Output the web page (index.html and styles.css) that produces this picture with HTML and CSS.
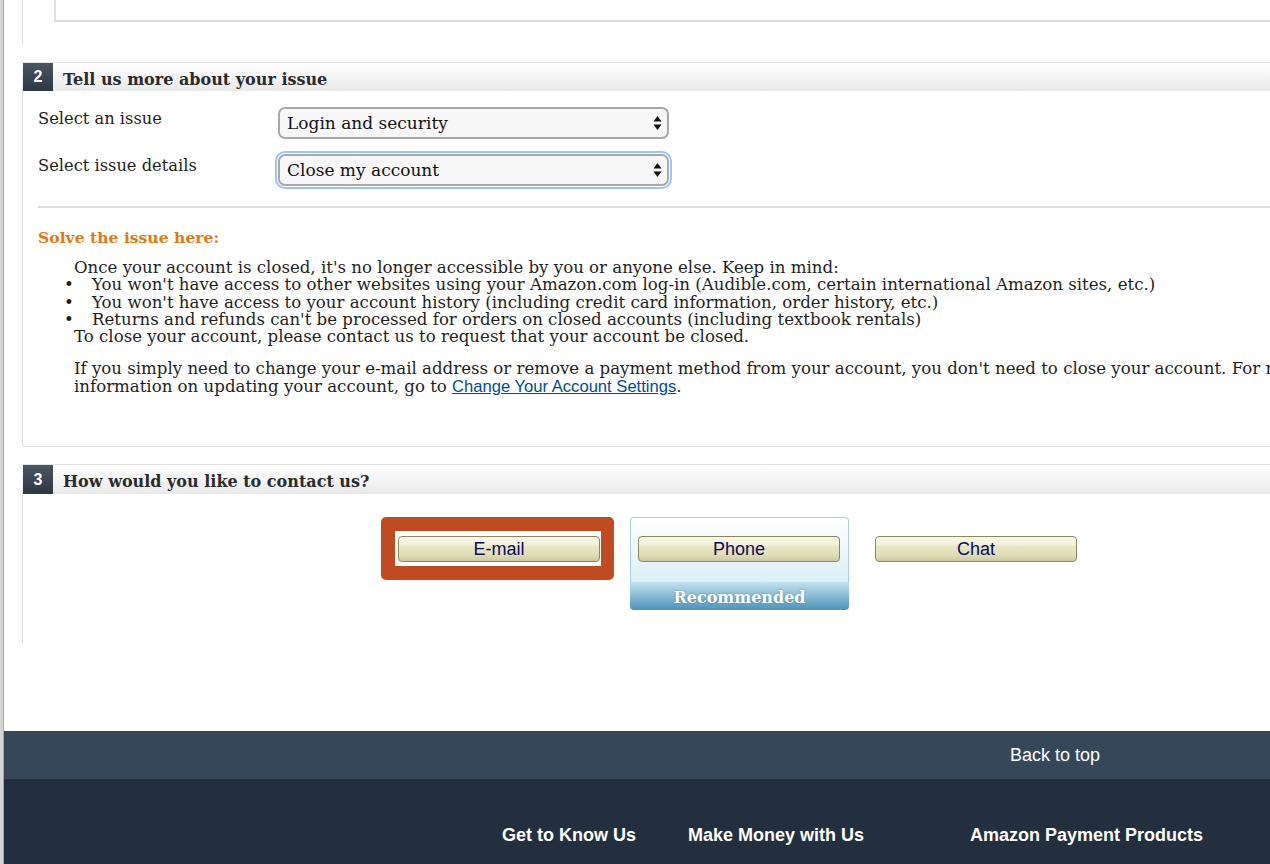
FILE: index.html
```html
<!DOCTYPE html>
<html>
<head>
<meta charset="utf-8">
<link rel="stylesheet" href="styles.css">
</head>
<body>
<div class="wrap">
  <div class="edge"></div>
  <div class="main">
    <div class="prev">
      <div class="prev-inner"></div>
    </div>

    <div class="section s2">
      <div class="sec-head">
        <span class="badge">2</span>
        <span class="sec-title">Tell us more about your issue</span>
      </div>
      <div class="sec-body">
        <div class="row">
          <span class="label">Select an issue</span>
          <div class="select">
            <span>Login and security</span>
            <svg width="9" height="16" viewBox="0 0 9 16"><path d="M4.5 1 L8.5 6.5 L0.5 6.5 Z M4.5 15 L8.5 9.5 L0.5 9.5 Z" fill="#111"/></svg>
          </div>
        </div>
        <div class="row">
          <span class="label">Select issue details</span>
          <div class="select focus">
            <span>Close my account</span>
            <svg width="9" height="16" viewBox="0 0 9 16"><path d="M4.5 1 L8.5 6.5 L0.5 6.5 Z M4.5 15 L8.5 9.5 L0.5 9.5 Z" fill="#111"/></svg>
          </div>
        </div>
        <div class="rule"></div>
        <h3 class="solve">Solve the issue here:</h3>
        <div class="answer">
          <div>Once your account is closed, it's no longer accessible by you or anyone else. Keep in mind:</div>
          <ul>
            <li>You won't have access to other websites using your Amazon.com log-in (Audible.com, certain international Amazon sites, etc.)</li>
            <li>You won't have access to your account history (including credit card information, order history, etc.)</li>
            <li>Returns and refunds can't be processed for orders on closed accounts (including textbook rentals)</li>
          </ul>
          <div>To close your account, please contact us to request that your account be closed.</div>
          <div class="gap"></div>
          <div>If you simply need to change your e-mail address or remove a payment method from your account, you don't need to close your account. For more</div>
          <div>information on updating your account, go to <a href="#">Change Your Account Settings</a>.</div>
        </div>
      </div>
    </div>

    <div class="section s3">
      <div class="sec-head">
        <span class="badge">3</span>
        <span class="sec-title">How would you like to contact us?</span>
      </div>
      <div class="sec-body contact">
        <div class="hl">
          <div class="hl-inner"><button class="btn">E-mail</button></div>
        </div>
        <div class="card">
          <div class="card-top"><button class="btn">Phone</button></div>
          <div class="card-band">Recommended</div>
        </div>
        <div class="plain"><button class="btn">Chat</button></div>
      </div>
    </div>

    <div class="footer">
      <div class="back">Back to top</div>
      <div class="foot-main">
        <div class="col c1">Get to Know Us</div>
        <div class="col c2">Make Money with Us</div>
        <div class="col c3">Amazon Payment Products</div>
      </div>
    </div>
  </div>
</div>
</body>
</html>
```

FILE: styles.css
```css
html, body {
  margin: 0;
  padding: 0;
  background: #fff;
  overflow: hidden;
}
.wrap {
  display: flex;
  width: 1270px;
  min-height: 864px;
}
.edge {
  width: 3px;
  flex: none;
  background: #d4d4d4;
  border-right: 1px solid #a8a8a8;
}
.main {
  flex: 1;
  min-width: 0;
  font-family: "DejaVu Serif", serif;
  color: #1e1e1e;
}
.prev {
  margin-left: 18px;
  height: 44px;
  border-left: 1px solid #e0e0e0;
}
.prev-inner {
  margin-left: 31px;
  height: 20px;
  border-left: 2px solid #e0e0e0;
  border-bottom: 2px solid #dcdcdc;
}
.section {
  margin-left: 18px;
}
.s2 {
  margin-top: 18px;
}
.s3 {
  margin-top: 17px;
}
.sec-head {
  display: flex;
  align-items: center;
  height: 28px;
  border-top: 1px solid #e2e2e2;
  background: linear-gradient(#ffffff, #e9e9e9);
}
.s3 .sec-head {
  height: 29px;
}
.badge {
  width: 30px;
  height: 100%;
  margin-left: 1px;
  background: linear-gradient(#4a5562, #2e3843);
  color: #fff;
  font-family: "Liberation Sans", Arial, sans-serif;
  font-weight: bold;
  font-size: 16px;
  display: flex;
  align-items: center;
  justify-content: center;
}
.sec-title {
  margin-left: 10px;
  font-weight: bold;
  font-size: 16px;
  color: #2b2b2b;
  padding-top: 4px;
}
.sec-body {
  border-left: 1px solid #dcdcdc;
}
.s2 .sec-body {
  height: 356px;
  border-bottom: 1px solid #e0e0e0;
  border-bottom-left-radius: 4px;
  padding-top: 16px;
  box-sizing: border-box;
}
.row {
  display: flex;
  align-items: flex-start;
  padding-left: 15px;
  margin-bottom: 15px;
}
.label {
  width: 240px;
  font-size: 16.3px;
  padding-top: 2px;
}
.select {
  width: 375px;
  height: 28px;
  border: 2px solid #a8a8a8;
  border-radius: 7px;
  background: #f7f7f7;
  display: flex;
  align-items: center;
  justify-content: space-between;
  padding: 0 5px 0 7px;
  font-size: 17px;
  color: #111;
}
.select.focus {
  outline: 2px solid #9bc3f6;
  outline-offset: 1px;
}
.rule {
  margin: 20px 0 0 15px;
  height: 2px;
  background: #dedede;
}
.solve {
  margin: 20px 0 0 15px;
  font-size: 15.6px;
  font-weight: bold;
  color: #e47911;
}
.answer {
  margin: 12px 0 0 51px;
  font-size: 16.6px;
  line-height: 17.3px;
  white-space: nowrap;
}
.answer ul {
  margin: 0;
  padding: 0;
  list-style: none;
}
.answer li {
  display: flex;
  margin-left: -10px;
}
.answer li::before {
  content: "\2022";
  width: 28px;
  flex: none;
}
.gap {
  height: 15px;
}
.answer a {
  font-family: "Liberation Sans", Arial, sans-serif;
  color: #004b91;
  text-decoration: underline;
}
.contact {
  height: 149px;
  display: flex;
  align-items: flex-start;
  padding: 23px 0 0 358px;
  box-sizing: border-box;
}
.btn {
  width: 202px;
  height: 26px;
  border: 1px solid #8c885d;
  border-radius: 4px;
  background: linear-gradient(#f7f6e8 0%, #f3f2df 30%, #e8e6c2 40%, #e3e1bb 70%, #cbc8a2 100%);
  font-family: "Liberation Sans", Arial, sans-serif;
  font-size: 18px;
  color: #0b0b5c;
  padding: 0;
  display: block;
}
.hl {
  background: #c04b20;
  border-radius: 5px;
  padding: 14px 13px 14px 14px;
}
.hl-inner {
  background: #fff;
  padding: 5px 1px 4px 3px;
}
.card {
  margin-left: 16px;
  width: 219px;
}
.card-top {
  height: 65px;
  border: 1px solid #a9cfe2;
  border-bottom: none;
  border-radius: 4px 4px 0 0;
  background: linear-gradient(#ffffff, #dbeef7);
  padding: 18px 0 0 7px;
  box-sizing: border-box;
}
.card-band {
  height: 28px;
  background: linear-gradient(#c3e2ef, #4b94ba);
  border-radius: 0 0 4px 4px;
  color: #fff;
  font-weight: bold;
  font-size: 16px;
  text-align: center;
  line-height: 32px;
  text-shadow: 0 0 2px rgba(40, 90, 120, 0.5);
}
.plain {
  margin-left: 26px;
  padding-top: 19px;
}
.footer {
  margin-top: 88px;
  font-family: "Liberation Sans", Arial, sans-serif;
  color: #fff;
}
.back {
  height: 48px;
  background: #37475a;
  font-size: 18px;
  line-height: 48px;
  padding-left: 1006px;
}
.foot-main {
  background: #232f3e;
  height: 100px;
  display: flex;
  padding: 46px 0 0 498px;
  box-sizing: border-box;
}
.col {
  font-weight: bold;
  font-size: 18px;
}
.c1 { width: 186px; }
.c2 { width: 282px; }
```
